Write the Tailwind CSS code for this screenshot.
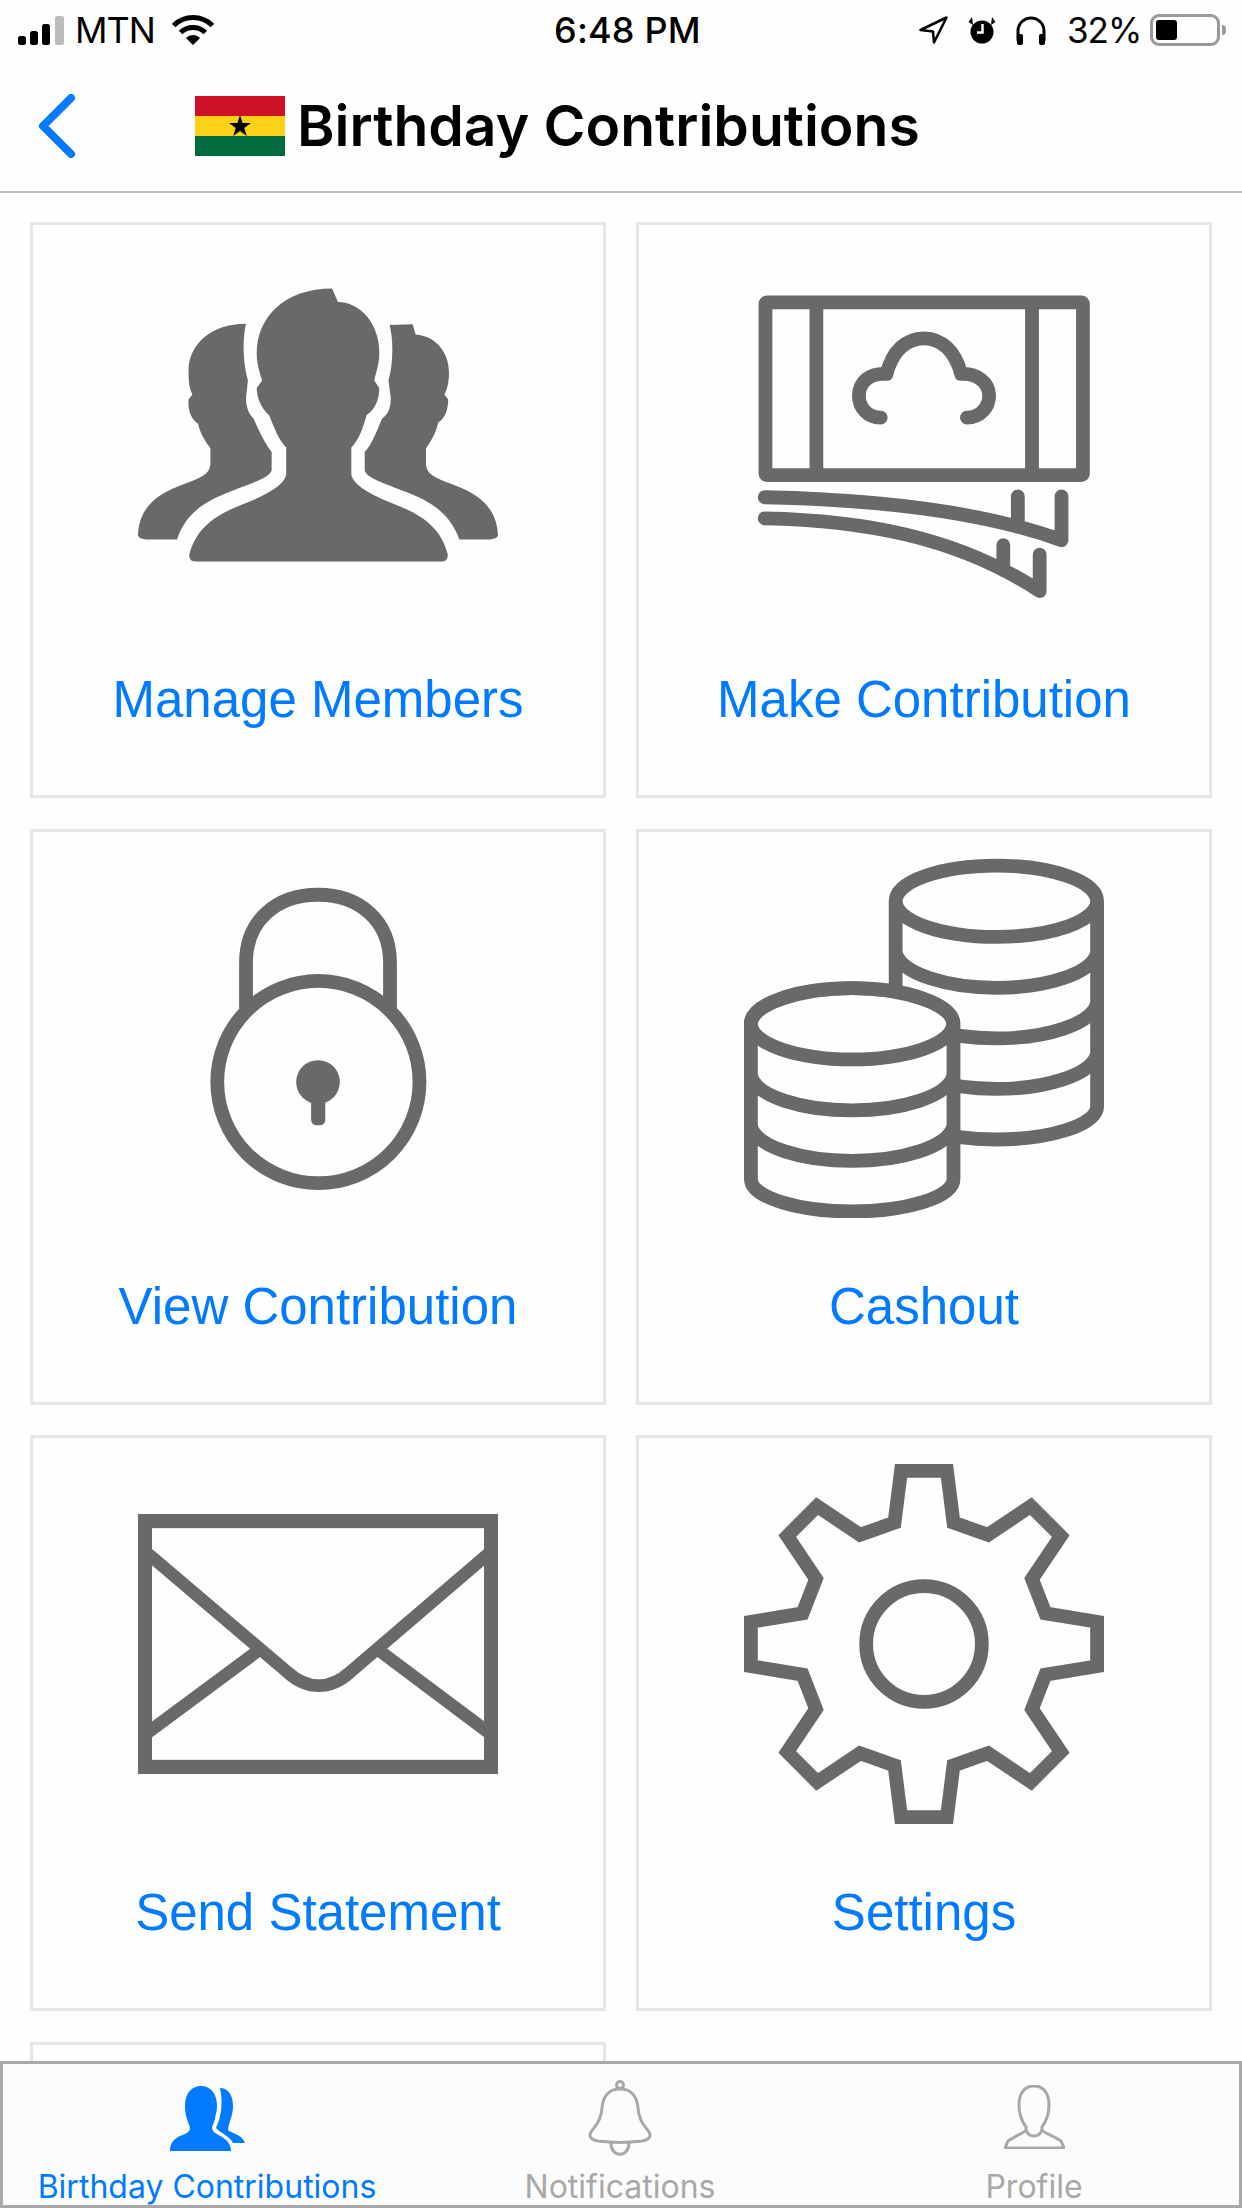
<!DOCTYPE html>
<html lang="en">
<head>
    <meta charset="UTF-8">
    <meta name="viewport" content="width=device-width, initial-scale=1.0">
    <title>Birthday Contributions</title>
    <script src="https://cdn.jsdelivr.net/npm/@tailwindcss/browser@4"></script>
</head>
<body class="bg-[#fefefe] font-['Liberation_Sans',sans-serif]">
<div class="flex flex-col w-[1242px] h-[2208px] overflow-hidden">

    <!-- Status bar -->
    <div class="flex items-center h-[60px] pl-[18px] pr-[16px] text-black text-[36px] leading-[60px] font-[Inter,sans-serif]">
        <div class="flex items-center w-[536px]">
            <svg width="47" height="29" viewBox="0 0 47 29">
                <rect x="0" y="20" width="8" height="9" rx="2.5" fill="#000"/>
                <rect x="12" y="15" width="8" height="14" rx="2.5" fill="#000"/>
                <rect x="24" y="8" width="8" height="21" rx="2.5" fill="#000"/>
                <rect x="37" y="0" width="9" height="29" rx="2.5" fill="#bbb"/>
            </svg>
            <span class="ml-[10px] w-[97px] tracking-[-1px]">MTN</span>
            <svg width="42" height="30" viewBox="0 0 42 30" fill="none" stroke="#000" stroke-width="5">
                <path d="M1.6 10.6A27.5 27.5 0 0 1 40.4 10.6"/>
                <path d="M8.6 17.6A17.5 17.5 0 0 1 33.4 17.6"/>
                <path d="M21 30L13.9 22.9A10 10 0 0 1 28.1 22.9Z" fill="#000" stroke="none"/>
            </svg>
        </div>
        <span class="w-[147px] font-medium whitespace-nowrap tracking-[0.2px]">6:48 PM</span>
        <div class="flex items-center ml-auto">
            <svg width="29" height="28" viewBox="0 0 29 28" fill="none" stroke="#000" stroke-width="2.5" stroke-linejoin="round">
                <path d="M27.5 1.5L1.5 14L14 15.5L15 26.5Z"/>
            </svg>
            <svg class="ml-[20px]" width="28" height="28" viewBox="0 0 28 28">
                <circle cx="14" cy="16" r="11.5" fill="#000"/>
                <path d="M4 1L0.5 6L5 9ZM24 1L27.5 6L23 9Z" fill="#000"/>
                <path d="M14.5 8V16.5H9" fill="none" stroke="#fff" stroke-width="2.5"/>
            </svg>
            <svg class="ml-[18px]" width="34" height="30" viewBox="0 0 34 30" fill="none" stroke="#000" stroke-width="3">
                <path d="M4 26V16A13 13 0 0 1 30 16V26"/>
                <rect x="3" y="19" width="6" height="11" rx="2" fill="#000" stroke="none"/>
                <rect x="25" y="19" width="6" height="11" rx="2" fill="#000" stroke="none"/>
            </svg>
            <span class="ml-[19px] w-[83px] text-[35px] whitespace-nowrap tracking-[-1px]">32%</span>
            <div class="flex items-center">
                <div class="w-[70px] h-[32px] p-[3px] border-[3px] border-[#999] rounded-[9px]">
                    <div class="w-[21px] h-full bg-black rounded-[3px]"></div>
                </div>
                <div class="ml-[2px] w-[4px] h-[10px] bg-[#999] rounded-r-full"></div>
            </div>
        </div>
    </div>

    <!-- Header -->
    <div class="flex items-center h-[133px] pl-[38px] border-b-2 border-[#bdbdbd]">
        <svg width="38" height="64" viewBox="0 0 38 64" fill="none" stroke="#007aff" stroke-width="8" stroke-linecap="round" stroke-linejoin="round">
            <path d="M33 4L5 32L33 60"/>
        </svg>
        <svg class="ml-[119px]" width="90" height="60" viewBox="0 0 90 60">
            <rect width="90" height="20" fill="#ce1126"/>
            <rect y="20" width="90" height="20" fill="#fcd116"/>
            <rect y="40" width="90" height="20" fill="#006b3f"/>
            <path d="M45 19L47.6 27H56L49.2 32L51.8 40L45 35L38.2 40L40.8 32L34 27H42.4Z" fill="#000"/>
        </svg>
        <h1 class="ml-[12px] text-[57px] leading-[60px] font-semibold text-black font-[Inter,sans-serif] whitespace-nowrap">Birthday Contributions</h1>
    </div>

    <!-- Menu -->
    <main class="flex-1 overflow-hidden pl-[30px] pt-[29px]">
        <div class="grid grid-cols-[576px_576px] gap-x-[30px] gap-y-[30.5px]">

            <div class="h-[576px] border-[3px] border-[#e6e6e6] pt-[26px] flex flex-col items-center">
                <svg width="360" height="360" viewBox="308 107 940 940" fill="#696969">
                    <path d="M590 297C500 297 440 350 440 420C440 450 442 465 450 482L440 495C438 520 445 545 465 558C470 585 485 605 497 622L497 665C495 690 470 700 430 715C360 740 310 775 308 850Q312 860 330 860L410 860C430 800 470 765 550 735C600 715 650 700 657 680L657 632C640 610 625 580 610 545C595 530 590 510 590 490L595 445C582 400 580 340 590 297Z"/>
                    <path d="M965 300L1025 298L1033 325C1090 330 1120 375 1120 425C1120 450 1115 470 1108 482L1118 495C1118 520 1110 545 1092 555C1085 585 1072 605 1060 622L1060 665C1062 690 1085 700 1125 715C1195 740 1245 775 1248 850Q1245 860 1225 860L1147 860C1125 800 1085 765 1005 735C955 715 905 700 900 680L900 632C920 610 930 580 945 545C965 530 968 510 968 490L962 445C975 400 975 340 965 300Z"/>
                    <path d="M815 205L830 240C890 240 940 300 938 375C938 400 930 420 925 445L938 465C938 490 930 520 905 535C895 570 885 600 865 620L865 690C870 720 920 745 970 765C1050 795 1100 830 1117 900Q1117 918 1100 918L460 918Q440 918 442 900C460 830 510 795 590 765C640 745 690 720 695 690L695 620C675 600 665 570 650 535C630 520 618 490 618 465L632 445C625 420 618 400 618 375C618 280 690 205 815 205Z"/>
                </svg>
                <span class="mt-[59px] text-[51px] leading-[60px] text-[#007aff]">Manage Members</span>
            </div>

            <div class="h-[576px] border-[3px] border-[#e6e6e6] pt-[26px] flex flex-col items-center">
                <svg width="360" height="360" viewBox="298 107 940 940" fill="none" stroke="#696969" stroke-width="36" stroke-linecap="round" stroke-linejoin="round">
                    <rect x="354" y="241" width="829" height="451" rx="4"/>
                    <path d="M487 241V692M1050 241V692" stroke-linecap="butt"/>
                    <path d="M655 542C620 542 598 515 598 485C598 450 625 425 670 428C685 370 720 335 768 335C815 335 850 370 865 428C905 425 938 450 938 485C938 515 915 542 880 542"/>
                    <path d="M352 750C600 755 900 780 1127 862V748M1013 748V815"/>
                    <path d="M352 805C600 810 850 850 1070 995V900M975 875V940"/>
                </svg>
                <span class="mt-[59px] text-[51px] leading-[60px] text-[#007aff]">Make Contribution</span>
            </div>

            <div class="h-[576px] border-[3px] border-[#e6e6e6] pt-[26px] flex flex-col items-center">
                <svg width="360" height="360" viewBox="308 97 940 940" fill="none" stroke="#696969" stroke-width="36">
                    <circle cx="779" cy="682" r="264"/>
                    <path d="M590 490V370C590 260 670 193 778 193C885 193 966 260 966 370V490"/>
                    <circle cx="778" cy="682" r="57" fill="#696969" stroke="none"/>
                    <rect x="760" y="700" width="37" height="95" rx="14" fill="#696969" stroke="none"/>
                </svg>
                <span class="mt-[59px] text-[51px] leading-[60px] text-[#007aff]">View Contribution</span>
            </div>

            <div class="h-[576px] border-[3px] border-[#e6e6e6] pt-[26px] flex flex-col items-center">
                <svg width="360" height="360" viewBox="298 97 940 940" fill="none" stroke="#696969" stroke-width="36">
                    <ellipse cx="957" cy="210" rx="263" ry="93"/>
                    <path d="M694 210V745C694 795 820 832 957 832C1094 832 1220 795 1220 745V210"/>
                    <path d="M694 345C710 400 830 436 957 436C1085 436 1205 400 1220 345"/>
                    <path d="M694 477C710 532 830 568 957 568C1085 568 1205 532 1220 477"/>
                    <path d="M694 609C710 664 830 700 957 700C1085 700 1205 664 1220 609"/>
                    <path d="M316 530V935C316 985 445 1020 580 1020C715 1020 845 985 845 935V530C845 480 715 437 580 437C445 437 316 480 316 530Z" fill="#fefefe"/>
                    <ellipse cx="580" cy="530" rx="264" ry="93"/>
                    <path d="M316 665C330 720 450 756 580 756C710 756 830 720 845 665"/>
                    <path d="M316 797C330 852 450 888 580 888C710 888 830 852 845 797"/>
                </svg>
                <span class="mt-[59px] text-[51px] leading-[60px] text-[#007aff]">Cashout</span>
            </div>

            <div class="h-[576px] border-[3px] border-[#e6e6e6] pt-[26px] flex flex-col items-center">
                <svg width="360" height="360" viewBox="308 115 940 940" fill="none" stroke="#696969" stroke-width="36">
                    <rect x="326" y="264" width="904" height="642" stroke-width="37"/>
                    <path d="M335 350L700 660C750 705 810 705 860 660L1222 350" stroke-width="33"/>
                    <path d="M335 815L625 600M1222 815L935 600" stroke-width="33"/>
                </svg>
                <span class="mt-[59px] text-[51px] leading-[60px] text-[#007aff]">Send Statement</span>
            </div>

            <div class="h-[576px] border-[3px] border-[#e6e6e6] pt-[26px] flex flex-col items-center">
                <svg width="360" height="360" viewBox="298 115 940 940" fill="none" stroke="#696969" stroke-width="36">
                    <circle cx="768" cy="585" r="151"/>
                    <path d="M708 133H828L845 268L935 300L1047 225L1125 303L1050 415L1085 505L1220 527V643L1085 665L1050 755L1125 867L1047 945L935 870L845 902L828 1037H708L691 902L601 870L489 945L411 867L486 755L451 665L316 643V527L451 505L486 415L411 303L489 225L601 300L691 268Z"/>
                </svg>
                <span class="mt-[59px] text-[51px] leading-[60px] text-[#007aff]">Settings</span>
            </div>

            <div class="h-[576px] border-[3px] border-[#e6e6e6]"></div>
        </div>
    </main>

    <!-- Tab bar -->
    <nav class="grid grid-cols-[408px_418px_410px] h-[147px] border-[3px] border-[#a9a9a9] bg-[#fdfcfd] text-[32px] leading-[36px] text-[#a8a8a8] font-[Inter,sans-serif]">
        <div class="relative flex flex-col items-center">
            <svg class="absolute top-[22px]" width="75" height="65" viewBox="0 0 75 65" fill="#007aff">
                <path d="M31 0C41 0 47 8 47 20C47 26 45 30 45 33C44 37 42 40 42 42C42 48 54 50 58 56C60 59 61 62 61 65L0 65C0 58 3 54 8 51C14 48 20 47 20 42C20 40 18 37 17 33C16 30 15 26 15 20C15 8 21 0 31 0Z"/>
                <path d="M50 2C58 2 63 9 63 20C63 27 61 32 60 35C59 39 58 42 58 44C60 47 72 48 75 57L63 57C60 50 50 47 46 42C47 38 50 34 50 30C52 22 52 10 50 2Z"/>
            </svg>
            <span class="mt-[105px] text-[#007aff] whitespace-nowrap">Birthday Contributions</span>
        </div>
        <div class="relative flex flex-col items-center">
            <svg class="absolute top-[16px]" width="64" height="76" viewBox="0 0 64 76" fill="none" stroke="#a8a8a8" stroke-width="3">
                <circle cx="32" cy="5" r="3.5"/>
                <path d="M32 9C22 9 15 15 14 28C13 40 9 44 3 52C0 57 4 60 10 61C25 63 39 63 54 61C60 60 64 57 61 52C55 44 51 40 50 28C49 15 42 9 32 9Z"/>
                <path d="M23 63C23 78 41 78 41 63"/>
            </svg>
            <span class="mt-[105px] whitespace-nowrap">Notifications</span>
        </div>
        <div class="relative flex flex-col items-center">
            <svg class="absolute top-[21px]" width="61" height="64" viewBox="0 0 61 64" fill="none" stroke="#a8a8a8" stroke-width="3">
                <path d="M30 1C40 1 45 9 45 20C45 30 41 38 38 42L38 45C38 47 52 52 57 56L60 63L1 63L4 56C9 52 22 47 22 45L22 42C19 38 15 30 15 20C15 9 20 1 30 1Z"/>
                <path d="M22 45C25 53 35 53 38 45"/>
            </svg>
            <span class="mt-[105px] whitespace-nowrap">Profile</span>
        </div>
    </nav>
</div>
</body>
</html>
